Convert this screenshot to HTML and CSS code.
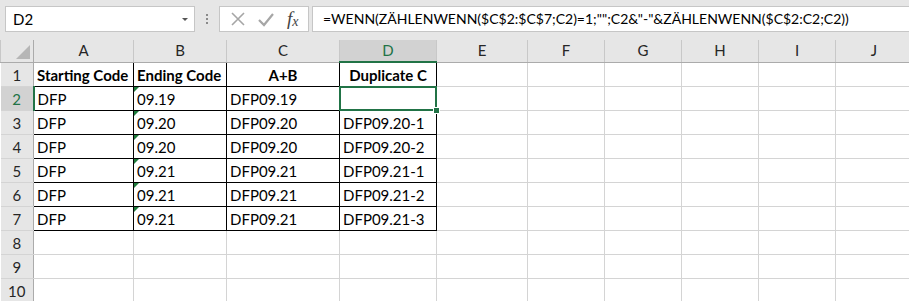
FILE: index.html
```html
<!DOCTYPE html>
<html lang="de">
<head>
    <meta charset="UTF-8">
    <title>Mappe1 - Excel</title>
    <link rel="stylesheet" href="styles.css">
</head>
<body>
    <div class="formula-row">
        <div class="name-box">
            <span>D2</span>
            <span class="drop-arrow"></span>
        </div>
        <div class="grip">
            <i></i><i></i><i></i>
        </div>
        <div class="fx-buttons">
            <svg class="fx-icon" width="16" height="16" viewBox="0 0 16 16">
                <path d="M2 2 L14 14 M14 2 L2 14" stroke="#a6a6a6" stroke-width="1.6" fill="none"/>
            </svg>
            <svg class="fx-icon" width="18" height="16" viewBox="0 0 18 16">
                <path d="M2 9 L7 14 L16 3" stroke="#a6a6a6" stroke-width="2.2" fill="none"/>
            </svg>
            <span class="fx-label">f<sub>x</sub></span>
        </div>
        <div class="formula-input">=WENN(ZÄHLENWENN($C$2:$C$7;C2)=1;"";C2&amp;"-"&amp;ZÄHLENWENN($C$2:C2;C2))</div>
    </div>

    <table class="sheet">
        <colgroup>
            <col class="w-hdr">
            <col class="w-a">
            <col class="w-b">
            <col class="w-c">
            <col class="w-d">
            <col class="w-e">
            <col class="w-f">
            <col class="w-f">
            <col class="w-f">
            <col class="w-f">
            <col class="w-f">
        </colgroup>
        <tr class="col-heads">
            <th class="corner"><span class="corner-tri"></span></th>
            <th>A</th><th>B</th><th>C</th><th class="active-col">D</th>
            <th>E</th><th>F</th><th>G</th><th>H</th><th>I</th><th>J</th>
        </tr>
        <tr>
            <th class="row-head">1</th>
            <td class="data bold">Starting Code</td>
            <td class="data bold">Ending Code</td>
            <td class="data bold center">A+B</td>
            <td class="data bold center">Duplicate C</td>
            <td></td><td></td><td></td><td></td><td></td><td></td>
        </tr>
        <tr>
            <th class="row-head active-row">2</th>
            <td class="data">DFP</td>
            <td class="data flag">09.19</td>
            <td class="data">DFP09.19</td>
            <td class="data selected"><div class="sel-box"><span class="fill-handle"></span></div></td>
            <td></td><td></td><td></td><td></td><td></td><td></td>
        </tr>
        <tr>
            <th class="row-head">3</th>
            <td class="data">DFP</td>
            <td class="data flag">09.20</td>
            <td class="data">DFP09.20</td>
            <td class="data">DFP09.20-1</td>
            <td></td><td></td><td></td><td></td><td></td><td></td>
        </tr>
        <tr>
            <th class="row-head">4</th>
            <td class="data">DFP</td>
            <td class="data flag">09.20</td>
            <td class="data">DFP09.20</td>
            <td class="data">DFP09.20-2</td>
            <td></td><td></td><td></td><td></td><td></td><td></td>
        </tr>
        <tr>
            <th class="row-head">5</th>
            <td class="data">DFP</td>
            <td class="data flag">09.21</td>
            <td class="data">DFP09.21</td>
            <td class="data">DFP09.21-1</td>
            <td></td><td></td><td></td><td></td><td></td><td></td>
        </tr>
        <tr>
            <th class="row-head">6</th>
            <td class="data">DFP</td>
            <td class="data flag">09.21</td>
            <td class="data">DFP09.21</td>
            <td class="data">DFP09.21-2</td>
            <td></td><td></td><td></td><td></td><td></td><td></td>
        </tr>
        <tr>
            <th class="row-head">7</th>
            <td class="data">DFP</td>
            <td class="data flag">09.21</td>
            <td class="data">DFP09.21</td>
            <td class="data">DFP09.21-3</td>
            <td></td><td></td><td></td><td></td><td></td><td></td>
        </tr>
        <tr>
            <th class="row-head">8</th>
            <td></td><td></td><td></td><td></td><td></td><td></td><td></td><td></td><td></td><td></td>
        </tr>
        <tr>
            <th class="row-head">9</th>
            <td></td><td></td><td></td><td></td><td></td><td></td><td></td><td></td><td></td><td></td>
        </tr>
        <tr>
            <th class="row-head">10</th>
            <td></td><td></td><td></td><td></td><td></td><td></td><td></td><td></td><td></td><td></td>
        </tr>
    </table>
</body>
</html>
```

FILE: styles.css
```css
body {
    margin: 0;
    background-color: #e6e6e6;
    font-family: 'Lato', 'Open Sans', sans-serif;
    font-size: 15px;
    color: #000;
    overflow: hidden;
    width: 909px;
    height: 301px;
}

/* formula bar */
.formula-row {
    height: 40px;
    display: flex;
    align-items: flex-start;
    padding-top: 6px;
    box-sizing: border-box;
}

.name-box {
    margin-left: 5px;
    width: 190px;
    height: 26px;
    background-color: #fff;
    border: 1px solid #c6c6c6;
    box-sizing: border-box;
    display: flex;
    align-items: center;
    justify-content: space-between;
    padding: 0 6px 0 7px;
    font-size: 15px;
}

.drop-arrow {
    width: 0;
    height: 0;
    border-left: 3px solid transparent;
    border-right: 3px solid transparent;
    border-top: 3px solid #555;
}

.grip {
    width: 24px;
    height: 26px;
    display: flex;
    flex-direction: column;
    align-items: center;
    justify-content: center;
    gap: 2px;
}

.grip i {
    width: 2px;
    height: 2px;
    background-color: #8a8a8a;
}

.fx-buttons {
    width: 90px;
    height: 26px;
    background-color: #fff;
    border: 1px solid #c6c6c6;
    box-sizing: border-box;
    display: flex;
    align-items: center;
    gap: 11px;
    padding-left: 10px;
}

.fx-label {
    font-family: 'Liberation Serif', serif;
    font-style: italic;
    font-size: 19px;
    color: #444;
    margin-left: 1px;
}

.fx-label sub {
    font-size: 14px;
    vertical-align: -1px;
}

.formula-input {
    margin-left: 3px;
    flex: 1;
    height: 26px;
    background-color: #fff;
    border: 1px solid #c6c6c6;
    border-right: none;
    box-sizing: border-box;
    padding-left: 10px;
    line-height: 24px;
    font-size: 14px;
    white-space: nowrap;
}

/* grid */
.sheet {
    border-collapse: collapse;
    table-layout: fixed;
    width: 912px;
    background-color: #fff;
}

.w-hdr { width: 33px; }
.w-a { width: 100px; }
.w-b { width: 93px; }
.w-c { width: 113px; }
.w-d { width: 97px; }
.w-e { width: 91px; }
.w-f { width: 77px; }

.sheet td {
    height: 23px;
    padding: 0 3px;
    border: 1px solid #d4d4d4;
    white-space: nowrap;
    overflow: hidden;
    vertical-align: bottom;
    line-height: 22px;
}

.col-heads th {
    height: 21px;
    background-color: #e6e6e6;
    border-left: 1px solid #c8c8c8;
    border-right: 1px solid #c8c8c8;
    border-bottom: 1px solid #ababab;
    border-top: none;
    font-weight: normal;
    color: #262626;
    font-size: 15px;
    padding: 0;
    line-height: 21px;
}

.col-heads th.corner {
    position: relative;
    border-right-color: #ababab;
}

.corner-tri {
    position: absolute;
    right: 3px;
    bottom: 3px;
    width: 0;
    height: 0;
    border-left: 14px solid transparent;
    border-bottom: 14px solid #b6b6b6;
}

.col-heads th.active-col {
    background-color: #d2d2d2;
    color: #217346;
    border-bottom: 2px solid #217346;
}

.row-head {
    background-color: #e6e6e6;
    border-right: 1px solid #ababab;
    border-bottom: 1px solid #d4d4d4;
    font-weight: normal;
    color: #262626;
    padding: 0;
    text-align: center;
    vertical-align: bottom;
    line-height: 22px;
}

.row-head.active-row {
    background-color: #d2d2d2;
    color: #217346;
    border-right: 2px solid #217346;
}

.sheet td.data {
    border: 1px solid #000;
}

.bold {
    font-weight: bold;
}

.center {
    text-align: center;
}

.sheet td.flag {
    position: relative;
}

.sheet td.flag::before {
    content: "";
    position: absolute;
    left: 0;
    top: 0;
    width: 0;
    height: 0;
    border-top: 5px solid #1e7b3c;
    border-right: 5px solid transparent;
}

.sheet td.selected {
    position: relative;
    overflow: visible;
}

.sel-box {
    position: absolute;
    left: -1px;
    top: -1px;
    right: -1px;
    bottom: -1px;
    border: 2px solid #217346;
    z-index: 2;
}

.fill-handle {
    position: absolute;
    right: -5px;
    bottom: -5px;
    width: 5px;
    height: 5px;
    background-color: #217346;
    border: 1px solid #fff;
}
```
